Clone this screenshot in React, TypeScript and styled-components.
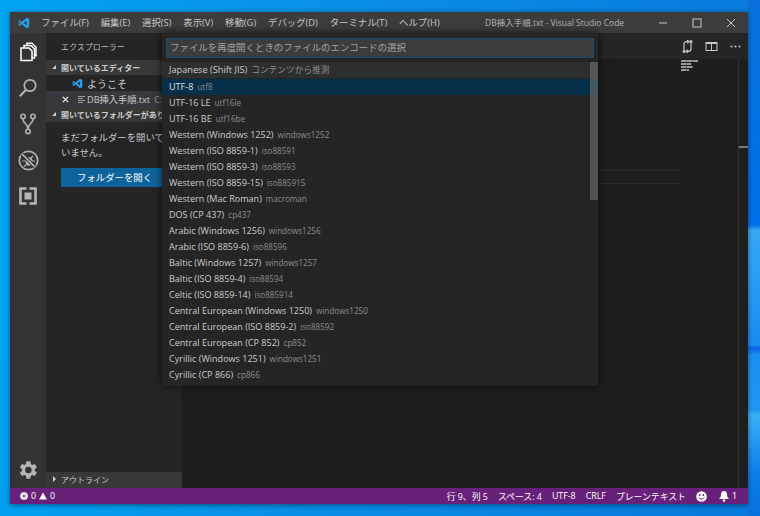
import React from "react";
import styled, { createGlobalStyle } from "styled-components";

const font = `"Open Sans", "Noto Sans CJK JP", sans-serif`;

const Global = createGlobalStyle`
  html, body { margin: 0; padding: 0; width: 760px; height: 516px; overflow: hidden; }
  * { box-sizing: border-box; }
  body { font-family: ${font}; }
  svg { flex: none; }
`;

const Desktop = styled.div`
  width: 760px;
  height: 516px;
  padding: 12px 12px 12px 10px;
  background:
    linear-gradient(180deg, #0a72da 0, #0070ea 225px, #38a8f4 230px, #1a8cf0 345px, #0a62e4 348px, #1a90f0 355px, #1f98f2 410px, #3ab0f5 415px, #1080e8 470px, #0870dc 516px) no-repeat right top / 12px 100%,
    linear-gradient(96deg, #00a4f2 0%, #0a8fe6 40%, #0878dc 100%);
`;

const Window = styled.div`
  position: relative;
  height: 492px;
  display: flex;
  flex-direction: column;
  background: #1e1e1e;
  box-shadow: 0 1px 5px rgba(0, 0, 0, 0.45);
  overflow: hidden;
`;

const TitleBar = styled.div`
  height: 21px;
  flex: none;
  display: flex;
  align-items: center;
  background: #3c3c3c;
  color: #cccccc;
  font-size: 9.4px;
`;

const Logo = styled.div`
  width: 28px;
  padding-left: 8px;
  display: flex;
`;

const Menu = styled.div`
  display: flex;
  width: 442px;
  gap: 11.85px;
  padding-left: 3px;
  padding-bottom: 2px;
  color: #c8c8c8;
  white-space: nowrap;
`;

const Title = styled.div`
  color: #b4b4b4;
  margin-left: 5px;
  padding-bottom: 2px;
  width: 141px;
  font-size: 8.5px;
  white-space: nowrap;
`;

const Controls = styled.div`
  display: flex;
  margin-left: auto;
`;

const Control = styled.div`
  width: 34px;
  height: 21px;
  display: flex;
  align-items: center;
  justify-content: center;
`;

const Main = styled.div`
  flex: 1;
  display: flex;
  min-height: 0;
`;

const ActivityBar = styled.div`
  width: 36px;
  flex: none;
  background: #333333;
  display: flex;
  flex-direction: column;
  align-items: center;
  padding-top: 7px;
  gap: 12px;
`;

const ActivityIcon = styled.div`
  width: 20px;
  height: 24px;
  display: flex;
  align-items: center;
  justify-content: center;
`;

const ActivityBottom = styled.div`
  margin-top: auto;
  margin-bottom: 7px;
  display: flex;
`;

const Sidebar = styled.div`
  width: 136px;
  flex: none;
  background: #252526;
  display: flex;
  flex-direction: column;
  color: #cccccc;
  overflow: hidden;
  white-space: nowrap;
`;

const SidebarHeader = styled.div`
  height: 27px;
  flex: none;
  padding: 0 0 1px 15px;
  display: flex;
  align-items: center;
  font-size: 8px;
  color: #bbbbbb;
`;

const Section = styled.div`
  height: 15px;
  flex: none;
  background: #383838;
  display: flex;
  align-items: center;
  padding: 0 0 1px 6px;
  gap: 5px;
  font-size: 8px;
  font-weight: 700;
  color: #cccccc;
`;

const OutlineSection = styled(Section)`
  height: 16px;
  padding-bottom: 2px;
  font-weight: 400;
`;

const Arrow = styled.span<{ $open?: boolean }>`
  width: 0;
  height: 0;
  flex: none;
  ${(p) =>
    p.$open
      ? `border-left: 4px solid transparent; border-bottom: 4px solid #cccccc;`
      : `border-left: 3px solid #cccccc; border-top: 3px solid transparent; border-bottom: 3px solid transparent; margin-left: 1px;`}
`;

const FileRow = styled.div<{ $active?: boolean }>`
  height: 16px;
  flex: none;
  display: flex;
  align-items: center;
  font-size: ${(p) => (p.$active ? "9.2px" : "10px")};
  gap: 4px;
  background: ${(p) => (p.$active ? "#37373d" : "transparent")};
  padding-left: ${(p) => (p.$active ? "16px" : "26px")};
`;

const LinesIcon = styled.span`
  display: flex;
  margin: 0 -3px 0 4px;
`;

const Path = styled.span`
  color: #9a9a9a;
  font-size: 8.4px;
`;

const EmptyNote = styled.div`
  padding: 8px 0 0 15px;
  font-size: 9.4px;
  line-height: 15px;
  color: #cccccc;
  white-space: normal;
  width: 123px;
`;

const OpenButton = styled.div`
  margin: 8px 0 0 15px;
  width: 130px;
  height: 19px;
  flex: none;
  background: #0e639c;
  color: #ffffff;
  font-size: 9.4px;
  display: flex;
  align-items: center;
  padding: 0 0 1px 16px;
`;

const Spacer = styled.div`
  flex: 1;
`;

const Editor = styled.div`
  flex: 1;
  display: flex;
  flex-direction: column;
  min-width: 0;
`;

const EditorHeader = styled.div`
  height: 26px;
  flex: none;
  background: #252526;
  display: flex;
  align-items: center;
  justify-content: flex-end;
  gap: 11px;
  padding-right: 6px;
`;

const HeaderIcon = styled.div`
  width: 13px;
  height: 13px;
  display: flex;
`;

const EditorBody = styled.div`
  position: relative;
  flex: 1;
  background: #1e1e1e;
`;

const Minimap = styled.div`
  position: absolute;
  left: 499px;
  top: 1px;
  width: 17px;
  display: flex;
  flex-direction: column;
  gap: 1.5px;
`;

const MiniLine = styled.div<{ $w: number }>`
  height: 1.5px;
  width: ${(p) => p.$w}px;
  background: repeating-linear-gradient(90deg, #9a9a9a 0 5px, #6a6a6a 5px 6px);
`;

const ScrollTrack = styled.div`
  position: absolute;
  right: 0;
  top: 0;
  bottom: 0;
  width: 10px;
  border-left: 1px solid #333333;
`;

const ScrollMark = styled.div`
  position: absolute;
  left: 0;
  right: 0;
  top: 87px;
  height: 2px;
  background: #7a7a7a;
`;

const FaintLine = styled.div<{ $top: number }>`
  position: absolute;
  left: 416px;
  width: 82px;
  height: 1px;
  top: ${(p) => p.$top}px;
  background: #2a2a2a;
`;

const StatusBar = styled.div`
  height: 16px;
  flex: none;
  background: #68217a;
  color: #ffffff;
  font-size: 8.85px;
  display: flex;
  align-items: center;
  padding: 0 11px 0 10px;
  white-space: nowrap;
`;

const StatusGroup = styled.div`
  display: flex;
  align-items: center;
  gap: 3px;
`;

const BellGroup = styled(StatusGroup)`
  margin-left: 2px;
`;

const StatusRight = styled.div`
  margin-left: auto;
  display: flex;
  align-items: center;
  gap: 10px;
`;

const QuickOpen = styled.div`
  position: absolute;
  left: 152px;
  top: 21px;
  width: 436px;
  height: 353px;
  background: #252526;
  box-shadow: 0 0 8px rgba(0, 0, 0, 0.7);
  display: flex;
  flex-direction: column;
`;

const InputWrap = styled.div`
  padding: 5px 4px 4px;
  flex: none;
`;

const QuickInput = styled.div`
  height: 20px;
  background: #3c3c3c;
  border: 1px solid #0e4f7c;
  color: #a3a3a3;
  font-size: 9.45px;
  padding: 0 0 2px 3px;
  display: flex;
  align-items: center;
`;

const List = styled.div`
  position: relative;
  flex: 1;
  overflow: hidden;
`;

const Row = styled.div<{ $kind?: "hint" | "sel" }>`
  height: 16px;
  display: flex;
  align-items: center;
  gap: 4px;
  padding: 0 0 2px 7px;
  font-size: ${(p) => (p.$kind === "hint" ? "9.2px" : "9.05px")};
  color: ${(p) => (p.$kind === "sel" ? "#e0e0e0" : "#cccccc")};
  white-space: nowrap;
  background: ${(p) =>
    p.$kind === "sel" ? "#062f4a" : p.$kind === "hint" ? "#2c2e2f" : "transparent"};
  margin-bottom: ${(p) => (p.$kind === "hint" ? "1px" : "0")};
`;

const Sub = styled.span<{ $hint?: boolean }>`
  color: #8e8e8e;
  font-size: ${(p) => (p.$hint ? "8.7px" : "8.1px")};
`;

const Thumb = styled.div`
  position: absolute;
  right: 0;
  top: 0;
  width: 8px;
  height: 138px;
  background: rgba(121, 121, 121, 0.55);
`;

const VSLogo = ({ size = 12 }: { size?: number }) => (
  <svg width={size} height={size} viewBox="0 0 16 16">
    <path d="M11.5 1 L15 2.6 V13.4 L11.5 15 L5 9.6 L2.2 11.8 L1 11.1 V4.9 L2.2 4.2 L5 6.4 Z M11.5 5 L7.6 8 L11.5 11 Z M2.4 6.4 V9.6 L4 8 Z" fill="#2b9bea" fillRule="evenodd" />
  </svg>
);

const items: [string, string][] = [
  ["UTF-16 LE", "utf16le"],
  ["UTF-16 BE", "utf16be"],
  ["Western (Windows 1252)", "windows1252"],
  ["Western (ISO 8859-1)", "iso88591"],
  ["Western (ISO 8859-3)", "iso88593"],
  ["Western (ISO 8859-15)", "iso885915"],
  ["Western (Mac Roman)", "macroman"],
  ["DOS (CP 437)", "cp437"],
  ["Arabic (Windows 1256)", "windows1256"],
  ["Arabic (ISO 8859-6)", "iso88596"],
  ["Baltic (Windows 1257)", "windows1257"],
  ["Baltic (ISO 8859-4)", "iso88594"],
  ["Celtic (ISO 8859-14)", "iso885914"],
  ["Central European (Windows 1250)", "windows1250"],
  ["Central European (ISO 8859-2)", "iso88592"],
  ["Central European (CP 852)", "cp852"],
  ["Cyrillic (Windows 1251)", "windows1251"],
  ["Cyrillic (CP 866)", "cp866"],
];

const menus = ["ファイル(F)", "編集(E)", "選択(S)", "表示(V)", "移動(G)", "デバッグ(D)", "ターミナル(T)", "ヘルプ(H)"];

export default function App() {
  return (
    <Desktop>
      <Global />
      <Window>
        <TitleBar>
          <Logo><VSLogo /></Logo>
          <Menu>{menus.map((m) => <span key={m}>{m}</span>)}</Menu>
          <Title>DB挿入手順.txt - Visual Studio Code</Title>
          <Controls>
            <Control>
              <svg width="10" height="10" viewBox="0 0 10 10"><path d="M1 5h8" stroke="#c8c8c8" strokeWidth="1" /></svg>
            </Control>
            <Control>
              <svg width="10" height="10" viewBox="0 0 10 10"><rect x="1" y="1" width="8" height="8" fill="none" stroke="#c8c8c8" strokeWidth="1" /></svg>
            </Control>
            <Control>
              <svg width="10" height="10" viewBox="0 0 10 10"><path d="M1 1l8 8M9 1l-8 8" stroke="#c8c8c8" strokeWidth="1" /></svg>
            </Control>
          </Controls>
        </TitleBar>
        <Main>
          <ActivityBar>
            <ActivityIcon>
              <svg width="18" height="20" viewBox="0 0 18 20" fill="none" stroke="#ffffff" strokeWidth="1.5">
                <path d="M2 6h8l3 3v9.500H2z" fill="#333333" />
                <path d="M5 6V3.500h7l3.500 3.500v9H13" />
                <path d="M8 3V1.200h5l4 4v8.500h-1.500" />
              </svg>
            </ActivityIcon>
            <ActivityIcon>
              <svg width="20" height="20" viewBox="0 0 20 20" fill="none" stroke="#b4b4b4" strokeWidth="1.7">
                <circle cx="12" cy="7.500" r="5.700" />
                <path d="M8 11.800L1.800 18.200" strokeWidth="2.200" />
              </svg>
            </ActivityIcon>
            <ActivityIcon>
              <svg width="16" height="22" viewBox="0 0 16 22" fill="none" stroke="#b4b4b4" strokeWidth="1.600">
                <circle cx="3" cy="3.500" r="2.200" />
                <circle cx="13" cy="3.500" r="2.200" />
                <circle cx="8" cy="18.500" r="2.200" />
                <path d="M3 6c0 5 5 4 5 10M13 6c0 5-5 4-5 10" />
              </svg>
            </ActivityIcon>
            <ActivityIcon>
              <svg width="21" height="21" viewBox="0 0 21 21" fill="none" stroke="#b4b4b4" strokeWidth="1.700">
                <circle cx="10.500" cy="10.500" r="9.200" />
                <ellipse cx="11" cy="11.500" rx="3.400" ry="4.200" fill="#b4b4b4" stroke="none" />
                <path d="M7 6l2.500 2.500M15 6l-2.500 2.500M4.500 11h3M14 11h3M6 16.500l2.500-2M16 16.500l-2.500-2" strokeWidth="1.200" />
                <path d="M4 4l13 13" stroke="#333333" strokeWidth="3.500" />
                <path d="M4 4l13 13" />
              </svg>
            </ActivityIcon>
            <ActivityIcon>
              <svg width="18" height="18" viewBox="0 0 18 18" fill="none" stroke="#b4b4b4" strokeWidth="2.600">
                <path d="M7.500 1.500H1.500V16.500H7.500M10.500 1.500H16.500V16.500H10.500" />
                <rect x="5.500" y="5.500" width="7" height="7" fill="#b4b4b4" stroke="none" />
              </svg>
            </ActivityIcon>
            <ActivityBottom>
              <svg width="22" height="22" viewBox="0 0 24 24">
                <path fill="#b4b4b4" d="M19.4 13a7.500 7.500 0 0 0 0-2l2.300-1.800-2.200-3.800-2.800 1.100a7.600 7.600 0 0 0-1.700-1L14.600 2.500h-4.400L9.800 5.500a7.600 7.600 0 0 0-1.700 1L5.300 5.400 3.100 9.200 5.400 11a7.500 7.500 0 0 0 0 2l-2.300 1.800 2.200 3.800 2.800-1.100a7.600 7.600 0 0 0 1.700 1l.4 3h4.400l.4-3a7.600 7.600 0 0 0 1.700-1l2.800 1.100 2.200-3.800zM12.400 15.500a3.500 3.500 0 1 1 0-7 3.500 3.500 0 0 1 0 7z" />
              </svg>
            </ActivityBottom>
          </ActivityBar>
          <Sidebar>
            <SidebarHeader>エクスプローラー</SidebarHeader>
            <Section><Arrow $open />開いているエディター</Section>
            <FileRow><VSLogo size={11} />ようこそ</FileRow>
            <FileRow $active>
              <svg width="7" height="7" viewBox="0 0 8 8"><path d="M1 1l6 6M7 1l-6 6" stroke="#e8e8e8" strokeWidth="1.600" /></svg>
              <LinesIcon>
                <svg width="9" height="9" viewBox="0 0 9 9"><path d="M1 1.500h7M1 3.500h5M1 5.500h7M1 7.500h5" stroke="#a8a8a8" strokeWidth="0.900" /></svg>
              </LinesIcon>
              DB挿入手順.txt <Path>C:</Path>
            </FileRow>
            <Section><Arrow $open />開いているフォルダーがあり</Section>
            <EmptyNote>まだフォルダーを開いていません。</EmptyNote>
            <OpenButton>フォルダーを開く</OpenButton>
            <Spacer />
            <OutlineSection><Arrow />アウトライン</OutlineSection>
          </Sidebar>
          <Editor>
            <EditorHeader>
              <HeaderIcon>
                <svg width="13" height="13" viewBox="0 0 13 13" fill="none" stroke="#c8c8c8" strokeWidth="1.200">
                  <path d="M3 11V4c0-1.500 1-2.300 2.500-2.300H7" />
                  <path d="M6 0L8.200 1.700 6 3.400" />
                  <path d="M10 2v7c0 1.500-1 2.300-2.500 2.300H6" />
                  <path d="M7 9.600L4.800 11.300 7 13" />
                  <circle cx="3" cy="11.500" r="0.900" />
                  <circle cx="10" cy="1.500" r="0.900" />
                </svg>
              </HeaderIcon>
              <HeaderIcon>
                <svg width="13" height="13" viewBox="0 0 13 13" fill="none" stroke="#c8c8c8">
                  <rect x="1" y="2.500" width="11" height="8" />
                  <path d="M1 3h11" strokeWidth="2" />
                  <path d="M6.500 3v7.500" />
                </svg>
              </HeaderIcon>
              <HeaderIcon>
                <svg width="13" height="13" viewBox="0 0 13 13" fill="#c8c8c8">
                  <circle cx="2.500" cy="6.500" r="1" />
                  <circle cx="6.500" cy="6.500" r="1" />
                  <circle cx="10.500" cy="6.500" r="1" />
                </svg>
              </HeaderIcon>
            </EditorHeader>
            <EditorBody>
              <Minimap>
                <MiniLine $w={17} />
                <MiniLine $w={10} />
                <MiniLine $w={12} />
                <MiniLine $w={8} />
              </Minimap>
              <FaintLine $top={111} />
              <FaintLine $top={124} />
              <ScrollTrack><ScrollMark /></ScrollTrack>
            </EditorBody>
          </Editor>
        </Main>
        <StatusBar>
          <StatusGroup>
            <svg width="8" height="8" viewBox="0 0 10 10"><circle cx="5" cy="5" r="4.800" fill="#fff" /><path d="M3 3l4 4M7 3l-4 4" stroke="#68217a" strokeWidth="1.100" /></svg>
            <span>0</span>
            <svg width="8" height="8" viewBox="0 0 10 9"><path d="M5 0l5 9H0z" fill="#fff" /></svg>
            <span>0</span>
          </StatusGroup>
          <StatusRight>
            <span>行 9、列 5</span>
            <span>スペース: 4</span>
            <span>UTF-8</span>
            <span>CRLF</span>
            <span>プレーンテキスト</span>
            <svg width="11" height="11" viewBox="0 0 11 11"><circle cx="5.500" cy="5.500" r="5.300" fill="#fff" /><circle cx="3.700" cy="4" r="0.900" fill="#68217a" /><circle cx="7.300" cy="4" r="0.900" fill="#68217a" /><path d="M2.800 6.500c.8 2 4.600 2 5.400 0" fill="none" stroke="#68217a" /></svg>
            <BellGroup>
              <svg width="10" height="11" viewBox="0 0 10 11"><path d="M5 0c2.200 0 3 1.700 3 3.500 0 2 .6 3.300 2 4.500H0c1.400-1.200 2-2.500 2-4.500C2 1.700 2.800 0 5 0z" fill="#fff" /><circle cx="5" cy="9.500" r="1.300" fill="#fff" /></svg>
              <span>1</span>
            </BellGroup>
          </StatusRight>
        </StatusBar>
        <QuickOpen>
          <InputWrap>
            <QuickInput>ファイルを再度開くときのファイルのエンコードの選択</QuickInput>
          </InputWrap>
          <List>
            <Thumb />
            <Row $kind="hint">Japanese (Shift JIS)<Sub $hint>コンテンツから推測</Sub></Row>
            <Row $kind="sel">UTF-8<Sub>utf8</Sub></Row>
            {items.map(([a, b]) => (
              <Row key={b}>{a}<Sub>{b}</Sub></Row>
            ))}
          </List>
        </QuickOpen>
      </Window>
    </Desktop>
  );
}
